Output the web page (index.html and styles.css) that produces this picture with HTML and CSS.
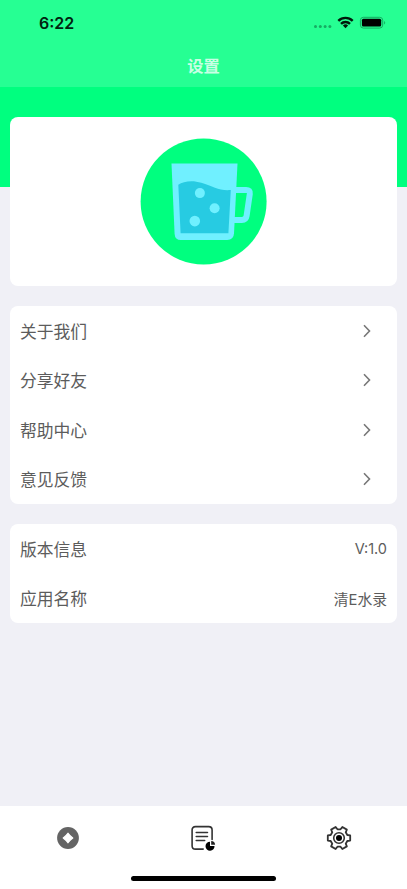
FILE: index.html
```html
<!DOCTYPE html>
<html lang="zh-CN">
<head>
<meta charset="utf-8">
<meta name="viewport" content="width=device-width, initial-scale=1">
<title>设置</title>
<link rel="stylesheet" href="styles.css">
</head>
<body>
<div class="screen">
  <header class="header">
    <div class="status">
      <span class="time">6:22</span>
      <svg class="status-icons" width="74" height="16" viewBox="0 0 74 16">
        <g fill="#16ac62"><circle cx="2.5" cy="11.6" r="1.5"/><circle cx="7.3" cy="11.6" r="1.5"/><circle cx="12.1" cy="11.6" r="1.5"/><circle cx="16.9" cy="11.6" r="1.5"/></g>
        <g fill="none" stroke="#001a0b" stroke-width="2.4"><path d="M25.3 5.8a10.3 10.3 0 0 1 14.4 0"/><path d="M28 8.8a6.4 6.4 0 0 1 9 0"/></g>
        <path d="M29.9 10.6a3.7 3.7 0 0 1 5.2 0L32.5 13.3z" fill="#001a0b"/>
        <rect x="47.4" y="2.3" width="22.3" height="10.8" rx="3" fill="none" stroke="#16ac62"/>
        <rect x="48.9" y="3.8" width="19.3" height="7.8" rx="1.5" fill="#000"/>
        <path d="M71.1 5.9c1.5.6 1.5 3 0 3.6z" fill="#16ac62"/>
      </svg>
    </div>
    <h1 class="title">设置</h1>
  </header>
  <main class="content">
    <section class="card logo-card">
      <svg width="128" height="128" viewBox="0.4 -0.5 128 128">
        <circle cx="64" cy="64" r="63" fill="#00ff7f"/>
        <path d="M94 52.4h12.5q4.2 0 3.7 4l-3.2 22q-.6 4-4.7 4H94" fill="none" stroke="#70f0ff" stroke-width="6"/>
        <path d="M31.9 26h66l-3.5 70q-.4 6.5-6.8 6.5H41.2q-5.8 0-6.2-6z" fill="#70f0ff"/>
        <path d="M38.7 47.3c5-3.5 14-5 23-2 12 3.6 18 8.4 29.5 7.3l-2.4 43.2H41z" fill="#27cbe2"/>
        <g fill="#70f0ff"><circle cx="60.3" cy="55.6" r="5"/><circle cx="75" cy="70.7" r="5"/><circle cx="55.2" cy="83.6" r="5.3"/></g>
      </svg>
    </section>
    <section class="card">
      <div class="row"><span>关于我们</span><svg class="chevron" viewBox="0 0 8 14"><path d="M1 1.3 6.5 7 1 12.7"/></svg></div>
      <div class="row"><span>分享好友</span><svg class="chevron" viewBox="0 0 8 14"><path d="M1 1.3 6.5 7 1 12.7"/></svg></div>
      <div class="row"><span>帮助中心</span><svg class="chevron" viewBox="0 0 8 14"><path d="M1 1.3 6.5 7 1 12.7"/></svg></div>
      <div class="row"><span>意见反馈</span><svg class="chevron" viewBox="0 0 8 14"><path d="M1 1.3 6.5 7 1 12.7"/></svg></div>
    </section>
    <section class="card">
      <div class="row"><span>版本信息</span><span class="value version">V:1.0</span></div>
      <div class="row"><span>应用名称</span><span class="value">清E水录</span></div>
    </section>
  </main>
  <footer class="footer">
    <nav class="tabs">
      <div class="tab">
        <svg width="26" height="26" viewBox="-13 -13 26 26"><circle r="10.9" fill="#646464"/><path d="M0-4.7Q2-2 4.7 0 2 2 0 4.7-2 2-4.7 0-2-2 0-4.7z" fill="#fff" stroke="#fff" stroke-width="1.4" stroke-linejoin="round"/></svg>
      </div>
      <div class="tab">
        <svg width="26" height="26" viewBox="0 0 26 26">
          <path d="M13.2 24.1H5.5q-3.4 0-3.4-3.4V5q0-3.4 3.4-3.4h13.2q3.4 0 3.4 3.4v9.4" fill="none" stroke="#333" stroke-width="1.6" stroke-linecap="round"/>
          <path d="M6.2 7.4h11.3M6.2 11.5h11.3M6.2 15.5h8.5" fill="none" stroke="#333" stroke-width="1.5" stroke-linecap="round"/>
          <path d="M20 16.7v4.2h4.5a4.5 4.5 0 1 1-4.5-4.2z" fill="#000"/>
          <path d="M21.2 15.9a4 4 0 0 1 3.9 3.8h-3.9z" fill="#222"/>
        </svg>
      </div>
      <div class="tab">
        <svg width="26" height="26" viewBox="-13 -13 26 26">
          <g fill="none" stroke="#333" stroke-width="1.8" stroke-linejoin="round">
            <path d="M11.2-2.6V2.6L8.3 3 6.75 5.7 7.85 8.4 3.35 11 1.55 8.7H-1.55L-3.35 11-7.85 8.4-6.75 5.7-8.3 3-11.2 2.6V-2.6L-8.3-3-6.75-5.7-7.85-8.4-3.35-11-1.55-8.7H1.55L3.35-11 7.85-8.4 6.75-5.7 8.3-3z"/>
            <circle r="5.3" stroke-width="1.6"/>
          </g>
          <circle r="3" fill="#000"/>
        </svg>
      </div>
    </nav>
    <div class="home-indicator"></div>
  </footer>
</div>
</body>
</html>
```
FILE: styles.css
```css
* {
  box-sizing: border-box;
}

body {
  margin: 0;
  font-family: Inter, "Noto Sans CJK SC", sans-serif;
}

.screen {
  display: flex;
  flex-direction: column;
  height: 889px;
  overflow: hidden;
  background: linear-gradient(#00ff7f 187px, #f0f0f6 187px);
}

.header {
  height: 87.4px;
  background: #26ff93;
}

.status {
  display: flex;
  justify-content: space-between;
  align-items: center;
  height: 44px;
  padding: 2px 20px 0 39px;
}

.time {
  font-size: 16px;
  font-weight: 600;
  line-height: 20px;
  color: #00230f;
}

.title {
  margin: 0;
  font-size: 16.3px;
  font-weight: 700;
  line-height: 45px;
  text-align: center;
  color: #c9ffe4;
}

.content {
  display: flex;
  flex: 1;
  flex-direction: column;
  gap: 20px;
  padding: 30px 10px 0;
}

.card {
  border-radius: 8px;
  background: #fff;
}

.logo-card {
  display: flex;
  justify-content: center;
  height: 168.5px;
  padding-top: 20px;
}

.row {
  display: flex;
  justify-content: space-between;
  align-items: center;
  height: 49.5px;
  padding: 0 10px;
  font-size: 16.8px;
  color: #5c5c5c;
}

.chevron {
  width: 8px;
  height: 14px;
  margin-right: 16px;
  fill: none;
  stroke: #777;
  stroke-width: 1.6;
}

.value {
  font-size: 14.8px;
}

.version {
  font-size: 14.5px;
}

.footer {
  display: flex;
  flex-direction: column;
  align-items: center;
  height: 83px;
  background: #fff;
}

.tabs {
  display: grid;
  grid-template-columns: repeat(3, 1fr);
  width: 100%;
  padding-top: 18.5px;
}

.tab {
  display: flex;
  justify-content: center;
}

.home-indicator {
  width: 145px;
  height: 5px;
  margin-top: 25.3px;
  border-radius: 3px;
  background: #000;
}
```
